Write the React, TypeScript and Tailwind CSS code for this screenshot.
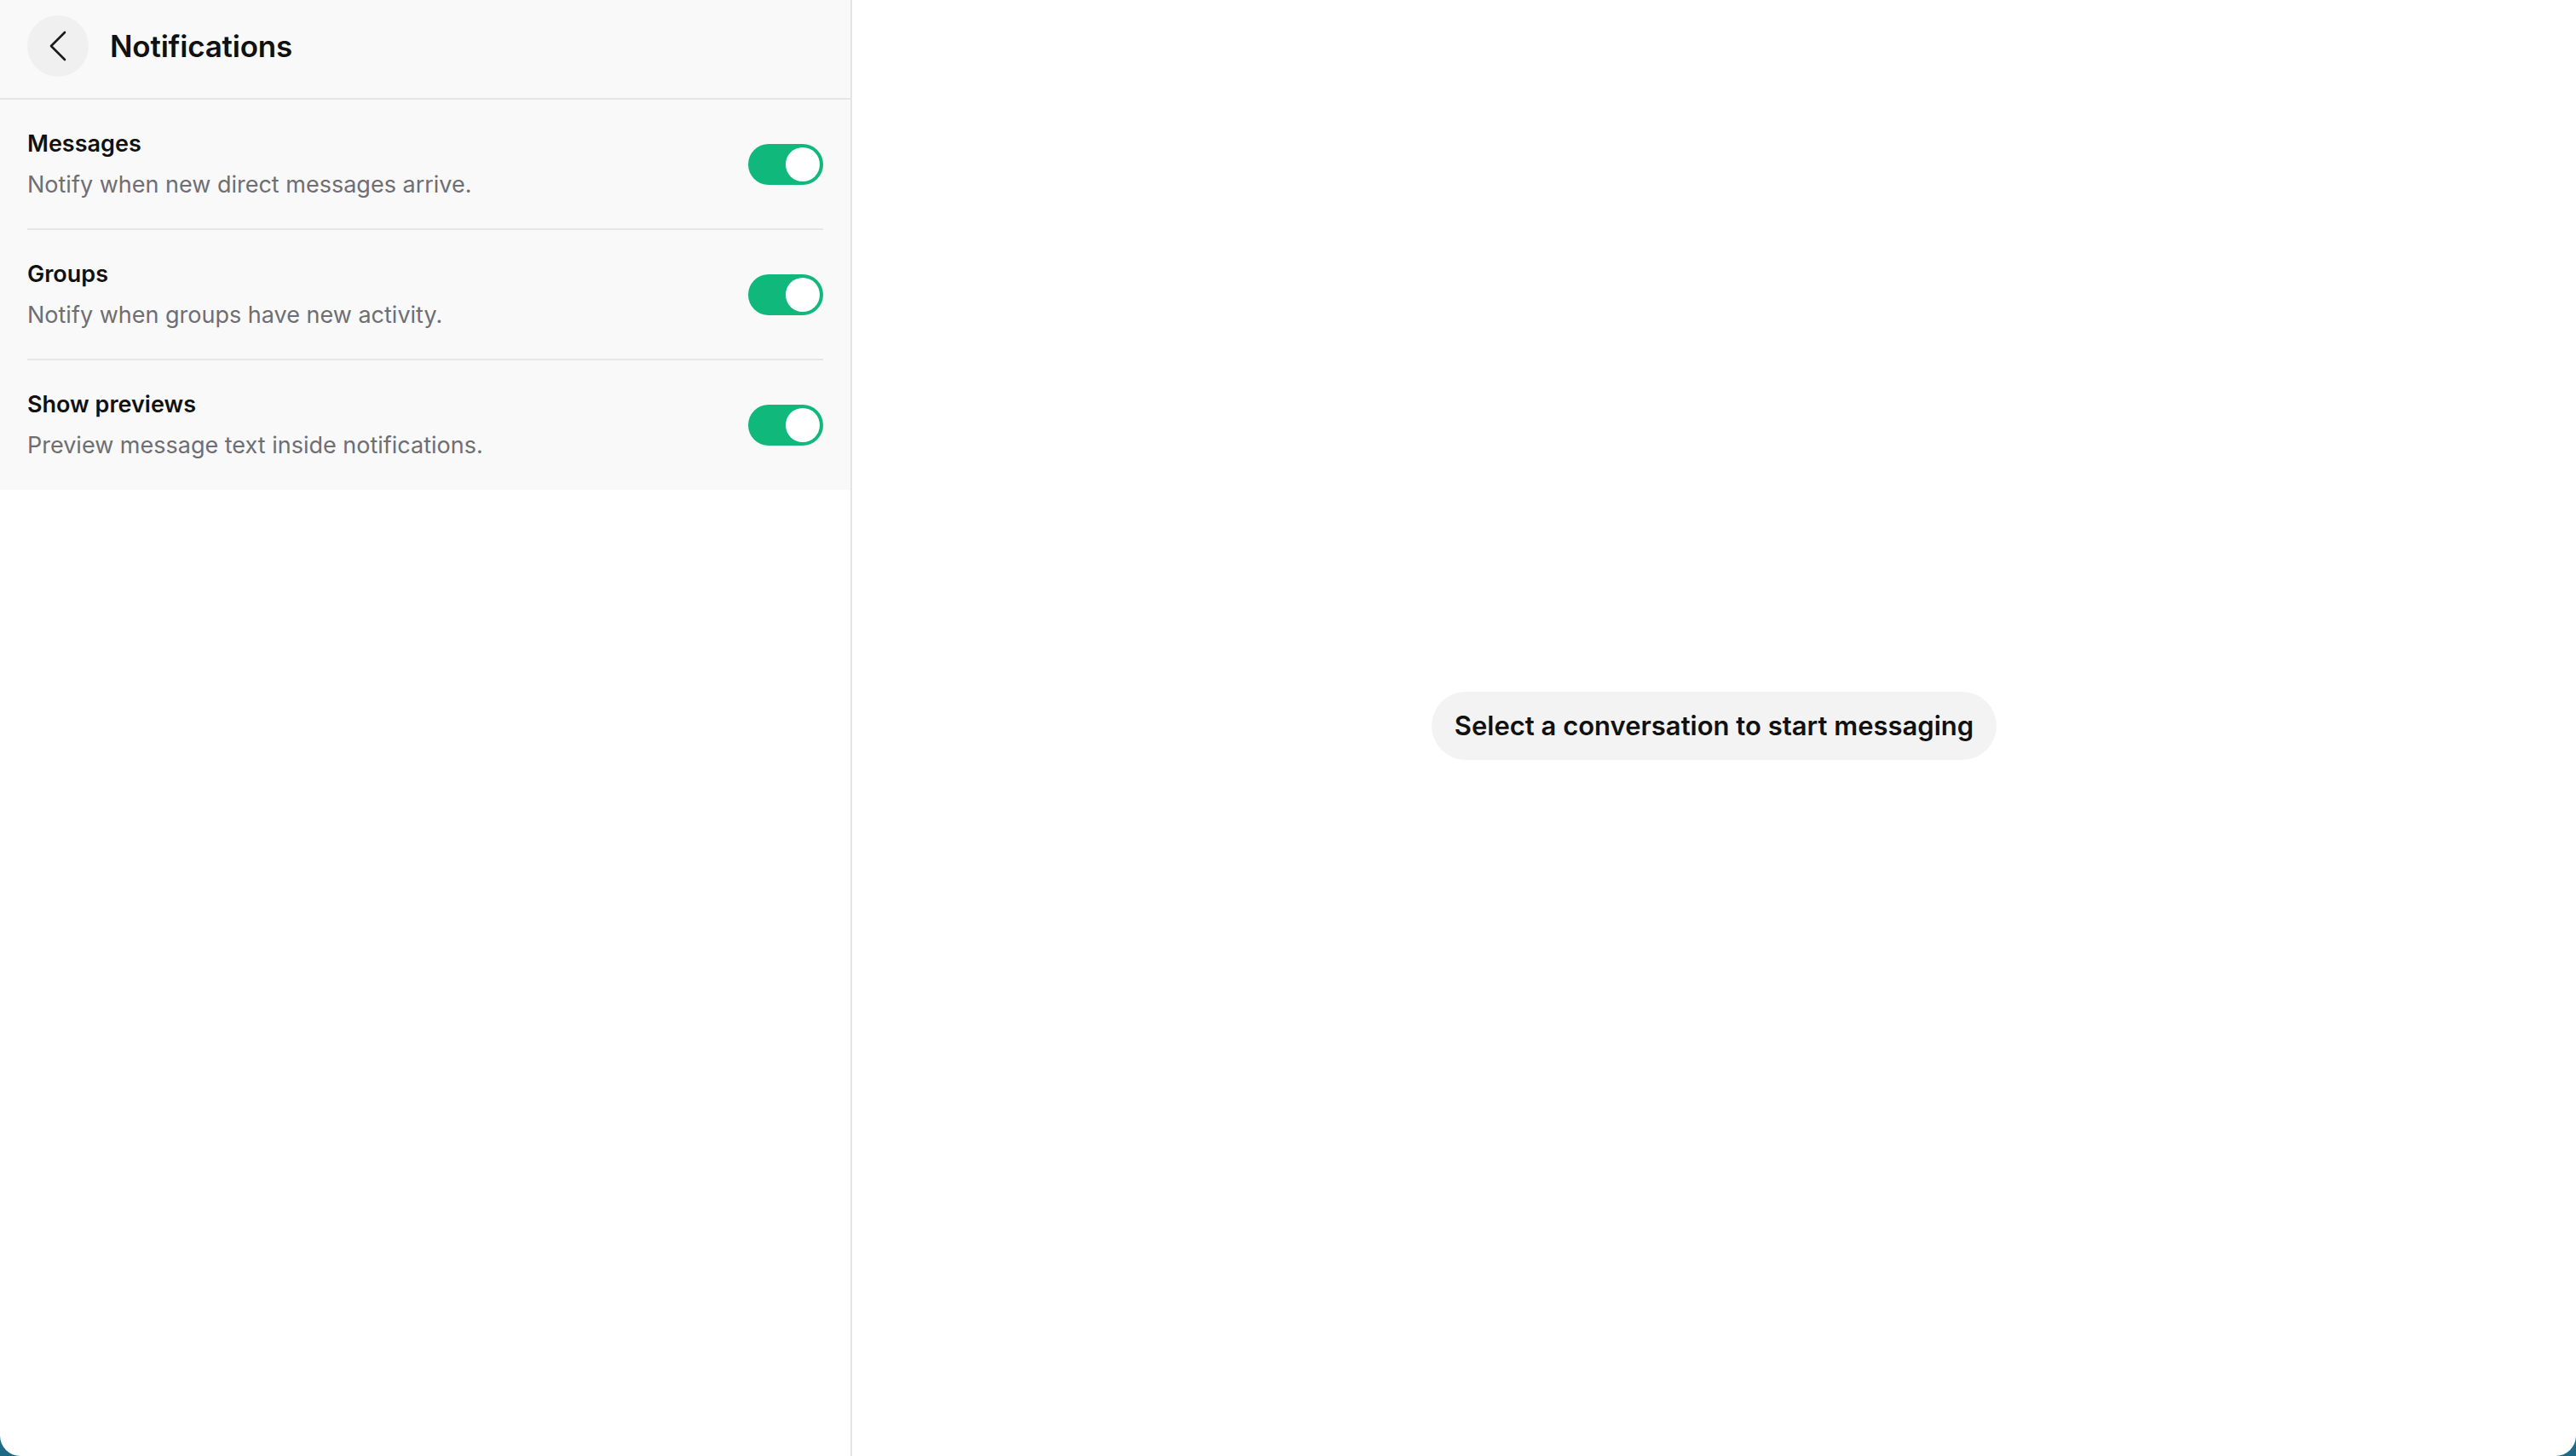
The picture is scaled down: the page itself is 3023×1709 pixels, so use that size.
import React, { useState } from 'react';

type Setting = {
  id: string;
  title: string;
  description: string;
};

const settings: Setting[] = [
  { id: 'messages', title: 'Messages', description: 'Notify when new direct messages arrive.' },
  { id: 'groups', title: 'Groups', description: 'Notify when groups have new activity.' },
  { id: 'previews', title: 'Show previews', description: 'Preview message text inside notifications.' }
];

function Toggle({ on, onChange }: { on: boolean; onChange: () => void }) {
  return (
    <button
      type="button"
      onClick={onChange}
      className={`flex h-[48px] w-[88px] shrink-0 items-center rounded-full p-[4px] transition-colors ${
        on ? 'justify-end bg-[#10b97b]' : 'justify-start bg-[#d4d4d8]'
      }`}
    >
      <span className="block h-[40px] w-[40px] rounded-full bg-white" />
    </button>
  );
}

export default function App() {
  const [enabled, setEnabled] = useState<Record<string, boolean>>({
    messages: true,
    groups: true,
    previews: true
  });

  return (
    <div className="h-screen w-screen bg-[#1d6a85] font-['Inter','Liberation_Sans',sans-serif]">
      <div className="flex h-full w-full overflow-hidden rounded-b-[24px] bg-white">
        {/* Sidebar */}
        <aside className="flex w-[1000px] shrink-0 flex-col border-r-2 border-[#e4e4e4]">
          <div className="bg-[#f9f9f9]">
            {/* Header */}
            <div className="flex items-center gap-[25px] border-b-2 border-[#e6e6e6] pl-8 pt-[18px] pb-[25px]">
              <button
                type="button"
                className="flex h-[72px] w-[72px] items-center justify-center rounded-full bg-[#f0f0f0]"
              >
                <svg width="24" height="38" viewBox="0 0 24 38" fill="none">
                  <path
                    d="M20 3 L4 19 L20 35"
                    stroke="#1a1a1a"
                    strokeWidth="2.6"
                    strokeLinecap="round"
                    strokeLinejoin="round"
                  />
                </svg>
              </button>
              <h1 className="text-[35px] font-semibold tracking-[-0.2px] text-[#111111]">Notifications</h1>
            </div>

            {/* Settings rows */}
            <div className="px-8">
              {settings.map((s, i) => (
                <div
                  key={s.id}
                  className={`flex items-center justify-between ${
                    i < settings.length - 1 ? 'h-[153px] border-b-2 border-[#e6e6e6]' : 'h-[152px]'
                  }`}
                >
                  <div className="flex flex-col gap-[12px]">
                    <span className="text-[27px] font-semibold leading-[36px] text-[#111111]">{s.title}</span>
                    <span className="text-[27px] leading-[36px] text-[#6e6e73]">{s.description}</span>
                  </div>
                  <Toggle
                    on={enabled[s.id]}
                    onChange={() => setEnabled(prev => ({ ...prev, [s.id]: !prev[s.id] }))}
                  />
                </div>
              ))}
            </div>
          </div>
        </aside>

        {/* Main */}
        <main className="flex flex-1 items-center justify-center">
          <div className="mb-[5px] rounded-full bg-[#f3f3f3] px-[27px] py-[20px]">
            <span className="text-[31px] font-semibold leading-[40px] text-[#111111]">
              Select a conversation to start messaging
            </span>
          </div>
        </main>
      </div>
    </div>
  );
}
